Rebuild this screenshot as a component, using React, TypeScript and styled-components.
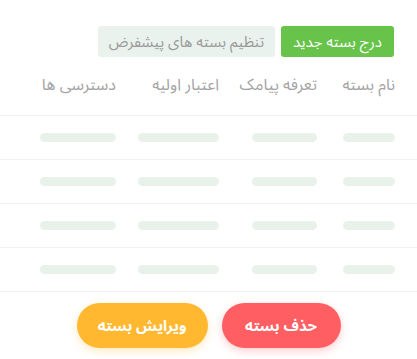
import React from "react";
import styled, { createGlobalStyle } from "styled-components";

const GlobalStyle = createGlobalStyle`
  html, body {
    margin: 0;
    padding: 0;
    background: #ffffff;
  }
  body {
    font-family: "Noto Sans Arabic", "DejaVu Sans", sans-serif;
  }
`;

const columns = [
  { title: "نام بسته", width: 78, bar: 52 },
  { title: "تعرفه پیامک", width: 98, bar: 65 },
  { title: "اعتبار اولیه", width: 103, bar: 81 },
  { title: "دسترسی ها", width: 77, bar: 76 },
];

const rows = [1, 2, 3, 4];

const Page = styled.div`
  direction: rtl;
  width: 417px;
  height: 359px;
  overflow: hidden;
  display: flex;
  flex-direction: column;
`;

const Toolbar = styled.div`
  display: flex;
  gap: 6px;
  padding: 26px 23px 0 0;
`;

const ToolButton = styled.button<{ $primary?: boolean }>`
  height: 31px;
  border: none;
  border-radius: 3px;
  padding: 0 8px;
  font-family: inherit;
  font-size: 15px;
  cursor: pointer;
  white-space: nowrap;
  background: ${(p) => (p.$primary ? "#67c34a" : "#e9f2ec")};
  color: ${(p) => (p.$primary ? "#ffffff" : "#9a9a9a")};
  width: ${(p) => (p.$primary ? "113px" : "177px")};
`;

const Row = styled.div<{ $header?: boolean }>`
  display: grid;
  grid-template-columns: ${columns.map((c) => `${c.width}px`).join(" ")};
  align-items: center;
  padding-right: 22px;
  height: ${(p) => (p.$header ? "58px" : "43px")};
  border-bottom: 1px solid #edf4ef;
`;

const HeadCell = styled.div`
  font-size: 16px;
  color: #a3a3a3;
  white-space: nowrap;
  padding-bottom: 2px;
`;

const Bar = styled.div`
  height: 9px;
  border-radius: 5px;
  background: #e8f2eb;
`;

const Actions = styled.div`
  display: flex;
  justify-content: center;
  gap: 14px;
  padding-top: 11px;
`;

const Pill = styled.button<{ $tone: "red" | "yellow" }>`
  height: 45px;
  border: none;
  border-radius: 23px;
  font-family: inherit;
  font-size: 15px;
  font-weight: bold;
  color: #ffffff;
  cursor: pointer;
  padding: 0;
  width: ${(p) => (p.$tone === "red" ? "119px" : "131px")};
  background: ${(p) => (p.$tone === "red" ? "#ff5e62" : "#ffb830")};
  box-shadow: 0 3px 8px
    ${(p) =>
      p.$tone === "red" ? "rgba(255, 94, 98, 0.3)" : "rgba(255, 184, 48, 0.3)"};
`;

export default function App() {
  return (
    <>
      <GlobalStyle />
      <Page>
        <Toolbar>
          <ToolButton $primary>درج بسته جدید</ToolButton>
          <ToolButton>تنظیم بسته های پیشفرض</ToolButton>
        </Toolbar>
        <Row $header>
          {columns.map((c) => (
            <HeadCell key={c.title}>{c.title}</HeadCell>
          ))}
        </Row>
        {rows.map((r) => (
          <Row key={r}>
            {columns.map((c) => (
              <Bar key={c.title} style={{ width: c.bar }} />
            ))}
          </Row>
        ))}
        <Actions>
          <Pill $tone="red">حذف بسته</Pill>
          <Pill $tone="yellow">ویرایش بسته</Pill>
        </Actions>
      </Page>
    </>
  );
}
